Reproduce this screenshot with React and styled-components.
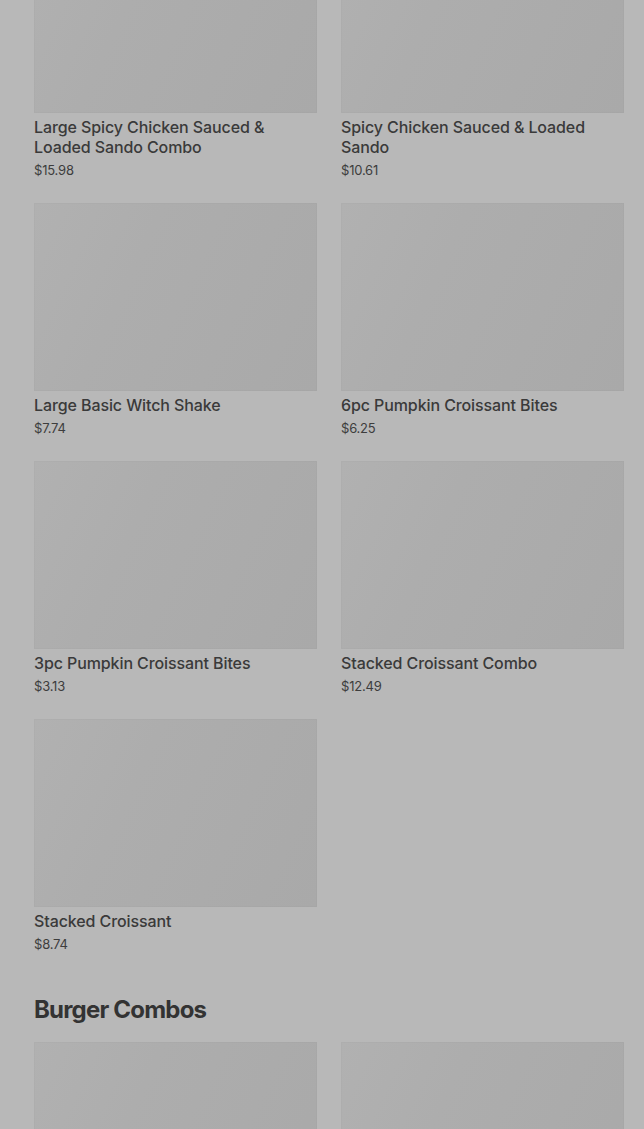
import styled, { createGlobalStyle } from 'styled-components';

const GlobalStyle = createGlobalStyle`
  html, body {
    margin: 0;
    padding: 0;
    background: #b8b8b8;
    overflow: hidden;
  }
  body {
    font-family: Inter, 'Noto Sans', sans-serif;
    color: #3a3a3a;
  }
`;

const Page = styled.main`
  height: 1129px;
  overflow: hidden;
  padding: 0 20px 0 34px;
  box-sizing: border-box;
`;

const Scroller = styled.div`
  margin-top: -75px;
`;

const Grid = styled.div`
  display: grid;
  grid-template-columns: 283px 283px;
  column-gap: 24px;
  row-gap: 24px;
`;

const Card = styled.article`
  display: flex;
  flex-direction: column;
`;

const Thumb = styled.div`
  height: 188px;
  background: linear-gradient(115deg, #b1b1b1 0%, #adadad 35%, #a9a9a9 100%);
  box-shadow: inset 0 0 0 1px rgba(0, 0, 0, 0.015);
`;

const Info = styled.div`
  padding-top: 4px;
`;

const Name = styled.div`
  font-size: 16px;
  font-weight: 500;
  line-height: 20px;
  color: #3a3a3a;
  letter-spacing: -0.1px;
`;

const Price = styled.div`
  margin-top: 4px;
  font-size: 13px;
  line-height: 18px;
  color: #3d3d3d;
  letter-spacing: -0.2px;
`;

const SectionTitle = styled.h2`
  margin: 41px 0 16px;
  font-size: 24px;
  line-height: 32px;
  font-weight: 700;
  letter-spacing: -0.8px;
  color: #333;
`;

const seasonal = [
  { name: 'Large Spicy Chicken Sauced & Loaded Sando Combo', price: '$15.98' },
  { name: 'Spicy Chicken Sauced & Loaded Sando', price: '$10.61' },
  { name: 'Large Basic Witch Shake', price: '$7.74' },
  { name: '6pc Pumpkin Croissant Bites', price: '$6.25' },
  { name: '3pc Pumpkin Croissant Bites', price: '$3.13' },
  { name: 'Stacked Croissant Combo', price: '$12.49' },
  { name: 'Stacked Croissant', price: '$8.74' },
];

function Item({ name, price }) {
  return (
    <Card>
      <Thumb />
      <Info>
        <Name>{name}</Name>
        <Price>{price}</Price>
      </Info>
    </Card>
  );
}

export default function App() {
  return (
    <>
      <GlobalStyle />
      <Page>
        <Scroller>
          <Grid>
            {seasonal.map((item) => (
              <Item key={item.name} {...item} />
            ))}
          </Grid>
          <SectionTitle>Burger Combos</SectionTitle>
          <Grid>
            <Card>
              <Thumb />
            </Card>
            <Card>
              <Thumb />
            </Card>
          </Grid>
        </Scroller>
      </Page>
    </>
  );
}
